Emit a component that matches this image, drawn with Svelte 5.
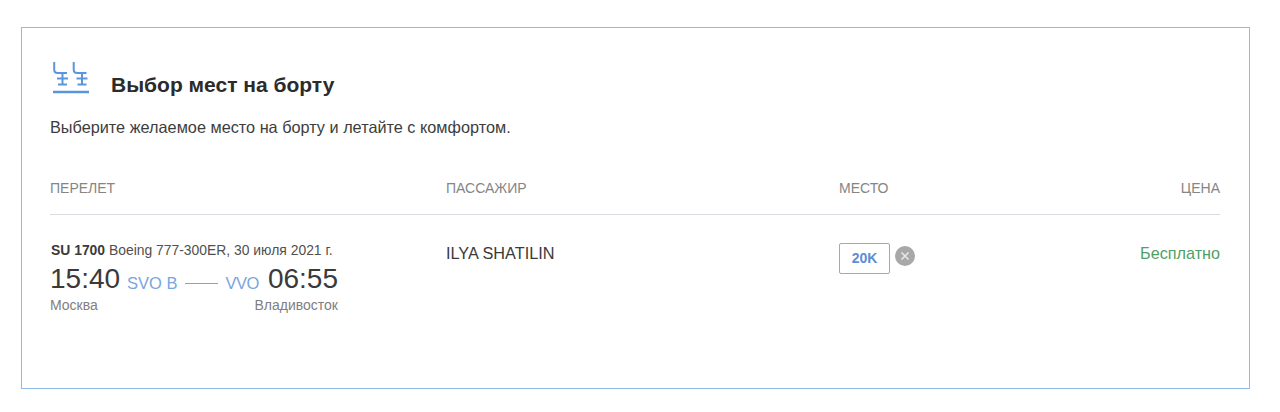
<script>
  const columns = ['ПЕРЕЛЕТ', 'ПАССАЖИР', 'МЕСТО', 'ЦЕНА'];
  const seats = [0, 19.5];
</script>

<main class="card">
  <header class="head">
    <svg class="seat" viewBox="0 0 38 32" width="38" height="32" aria-hidden="true">
      <g fill="none" stroke="#5b96dc" stroke-width="2">
        {#each seats as x}
          <g transform="translate({x} 0)">
            <path d="M2.200 0v7.500q0 3.500 3.500 3.500h9.300" />
            <path d="M5 16.500h11" />
            <path d="M10.500 11v11.500" />
            <path d="M6 22.500h9" />
          </g>
        {/each}
        <path d="M1 30h36" stroke-width="2.400" />
      </g>
    </svg>
    <h1>Выбор мест на борту</h1>
  </header>
  <p class="lead">Выберите желаемое место на борту и летайте с комфортом.</p>

  <div class="row labels">
    {#each columns as c}<span>{c}</span>{/each}
  </div>

  <div class="row data">
    <div class="flight">
      <div class="meta"><b>SU 1700</b> Boeing 777-300ER, 30 июля 2021 г.</div>
      <div class="times">
        <span class="time">15:40</span>
        <span class="code from">SVO B</span>
        <span class="dash"></span>
        <span class="code to">VVO</span>
        <span class="time arrive">06:55</span>
      </div>
      <div class="cities"><span>Москва</span><span>Владивосток</span></div>
    </div>
    <div class="name">ILYA SHATILIN</div>
    <div class="place">
      <span class="chip">20K</span>
      <span class="clear">
        <svg viewBox="0 0 20 20" width="20" height="20" aria-hidden="true">
          <circle cx="10" cy="10" r="10" fill="#a8a8a8" />
          <path d="M6.500 6.500l7 7M13.500 6.500l-7 7" stroke="#e8e8e8" stroke-width="1.500" />
        </svg>
      </span>
    </div>
    <div class="price">Бесплатно</div>
  </div>
</main>

<style>
  :global(body) {
    margin: 0;
    background: #fff;
  }
  .card {
    box-sizing: border-box;
    width: 1229px;
    height: 362px;
    margin: 27px 0 0 21px;
    padding: 34px 29px 0 28px;
    border: 1px solid #8fbbe8;
    font-family: "Liberation Sans", Arial, sans-serif;
    color: #333;
  }
  .head {
    display: flex;
    align-items: flex-start;
    height: 48px;
  }
  .seat {
    margin-left: 2px;
    flex: none;
  }
  h1 {
    margin: 11px 0 0 21px;
    font-size: 21px;
    line-height: 24px;
    font-weight: 700;
    color: #2b2b2b;
  }
  .lead {
    margin: 7px 0 0;
    font-size: 16.280px;
    line-height: 20px;
    color: #3d3d3d;
  }
  .row {
    display: grid;
    grid-template-columns: 396px 393px 1fr 120px;
  }
  .labels {
    margin-top: 43px;
    height: 34px;
    font-size: 14px;
    line-height: 17px;
    color: #858585;
    border-bottom: 1px solid #d9dde2;
  }
  .labels span:last-child {
    text-align: right;
  }
  .data {
    padding-top: 26px;
  }
  .meta {
    font-size: 13.900px;
    line-height: 18px;
    color: #505050;
    padding-left: 1px;
    white-space: nowrap;
  }
  .meta b {
    color: #3a3a3a;
  }
  .flight {
    width: 288px;
  }
  .times {
    display: flex;
    align-items: center;
    height: 30px;
    margin-top: 5px;
  }
  .time {
    font-size: 28px;
    line-height: 30px;
    color: #3a3a3a;
  }
  .arrive {
    margin-left: auto;
  }
  .code {
    font-size: 16.500px;
    line-height: 22px;
    color: #7aa5de;
    margin-top: 8px;
  }
  .from {
    margin-left: 7px;
  }
  .to {
    margin-left: 8px;
    letter-spacing: -0.500px;
  }
  .dash {
    width: 33px;
    height: 1px;
    background: #7aa5de;
    margin: 9px 0 0 7px;
  }
  .cities {
    display: flex;
    justify-content: space-between;
    margin-top: 3px;
    font-size: 14px;
    line-height: 16px;
    color: #808080;
  }
  .name {
    font-size: 16.300px;
    line-height: 20px;
    margin-top: 2px;
    color: #3a3a3a;
  }
  .place {
    display: flex;
    align-items: flex-start;
    gap: 5px;
    margin-top: 2px;
    align-self: start;
  }
  .chip {
    box-sizing: border-box;
    width: 51px;
    height: 31px;
    border: 1px solid #7fb0e6;
    border-radius: 2px;
    text-align: center;
    font-size: 14px;
    font-weight: 700;
    line-height: 29px;
    color: #5b8ed6;
  }
  .clear {
    display: flex;
    width: 20px;
    height: 20px;
    margin-top: 3px;
  }
  .price {
    font-size: 16.200px;
    line-height: 20px;
    margin-top: 2px;
    color: #4fa066;
    text-align: right;
  }
</style>
